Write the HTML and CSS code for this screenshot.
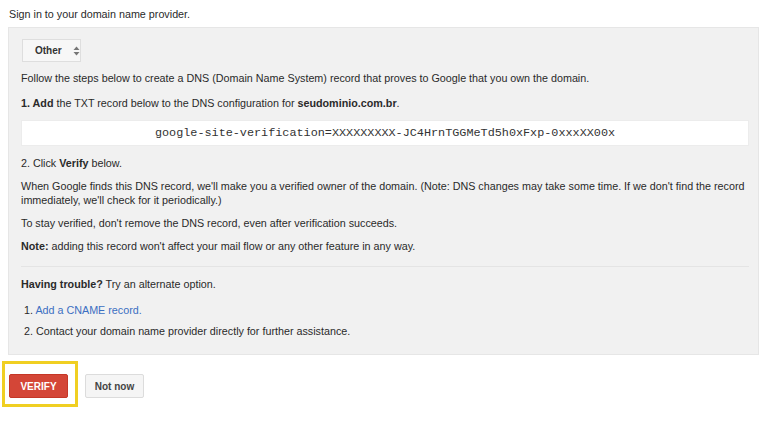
FILE: index.html
```html
<!DOCTYPE html>
<html>
<head>
<meta charset="utf-8">
<link rel="stylesheet" href="styles.css">
</head>
<body>
<p class="intro">Sign in to your domain name provider.</p>
<div class="panel">
  <div class="select"><span class="select-label">Other</span>
    <svg class="arrows" width="7" height="10" viewBox="0 0 7 10"><path d="M3.5 0.5 L6.5 4 H0.5 Z" fill="#777"/><path d="M3.5 9.5 L6.5 6 H0.5 Z" fill="#777"/></svg>
  </div>
  <p class="txt first">Follow the steps below to create a DNS (Domain Name System) record that proves to Google that you own the domain.</p>
  <p class="txt step1"><b>1. Add</b> the TXT record below to the DNS configuration for <b>seudominio.com.br</b>.</p>
  <div class="code">google-site-verification=XXXXXXXXX-JC4HrnTGGMeTd5h0xFxp-0xxxXX00x</div>
  <p class="txt">2. Click <b>Verify</b> below.</p>
  <p class="txt">When Google finds this DNS record, we'll make you a verified owner of the domain. (Note: DNS changes may take some time. If we don't find the record immediately, we'll check for it periodically.)</p>
  <p class="txt">To stay verified, don't remove the DNS record, even after verification succeeds.</p>
  <p class="txt"><b>Note:</b> adding this record won't affect your mail flow or any other feature in any way.</p>
  <hr class="sep">
  <p class="txt trouble"><b>Having trouble?</b> Try an alternate option.</p>
  <ol class="alts">
    <li><a class="link" href="#">Add a CNAME record.</a></li>
    <li>Contact your domain name provider directly for further assistance.</li>
  </ol>
</div>
<div class="actions">
  <div class="highlight"><button class="btn verify">VERIFY</button></div>
  <button class="btn notnow">Not now</button>
</div>
</body>
</html>
```
FILE: styles.css
```css
html, body {
  margin: 0;
  padding: 0;
  background: #fff;
}
body {
  font-family: Arial, "Liberation Sans", sans-serif;
  font-size: 10.75px;
  line-height: 14px;
  color: #2a2a2a;
}
.intro {
  margin: 7px 0 0 9px;
  height: 14px;
}
.panel {
  margin: 6px 0 0 8px;
  width: 751px;
  box-sizing: border-box;
  height: 328px;
  background: #f1f1f1;
  border: 1px solid #e6e6e6;
  padding: 11px 9px 0 12px;
}
.select {
  margin-left: 1px;
  width: 59px;
  height: 23px;
  box-sizing: border-box;
  border: 1px solid #dedede;
  background: #f7f7f7;
  display: flex;
  align-items: center;
  padding-left: 12px;
  gap: 11px;
}
.select-label {
  font-weight: bold;
  font-size: 10px;
  color: #333;
}
.txt {
  margin: 9px 0 0 0;
}
.txt.first {
  margin-top: 9px;
}
.txt.step1 {
  margin-top: 11px;
}
.code {
  margin-top: 10px;
  height: 26px;
  background: #fff;
  border: 1px solid #ececec;
  box-sizing: border-box;
  font-family: "Liberation Mono", "Courier New", monospace;
  font-size: 11.8px;
  color: #333;
  display: flex;
  align-items: center;
  justify-content: center;
}
.code + .txt {
  margin-top: 10px;
}
.sep {
  border: 0;
  border-top: 1px solid #e4e4e4;
  margin: 13px 0 0 0;
  height: 0;
}
.txt.trouble {
  margin-top: 10px;
}
.alts {
  margin: 12px 0 0 0;
  padding: 0 0 0 3px;
  list-style: none;
  counter-reset: alt;
}
.alts li {
  counter-increment: alt;
  margin-bottom: 7px;
}
.alts li::before {
  content: counter(alt) ". ";
}
.link {
  color: #3b6fc2;
  text-decoration: none;
}
.actions {
  display: flex;
  align-items: flex-start;
  margin: 6px 0 0 2px;
}
.highlight {
  border: 3px solid #f0cf22;
  padding: 10px 7px 6px 4px;
}
.btn {
  font-family: Arial, "Liberation Sans", sans-serif;
  font-weight: bold;
  font-size: 10px;
  height: 24px;
  width: 59px;
  border-radius: 2px;
  box-sizing: border-box;
  padding: 0;
  margin: 0;
}
.verify {
  display: block;
  background: #d44637;
  border: 1px solid #c53727;
  color: #fff;
}
.notnow {
  margin: 13px 0 0 7px;
  background: #f5f5f5;
  border: 1px solid #dcdcdc;
  color: #444;
}
```
